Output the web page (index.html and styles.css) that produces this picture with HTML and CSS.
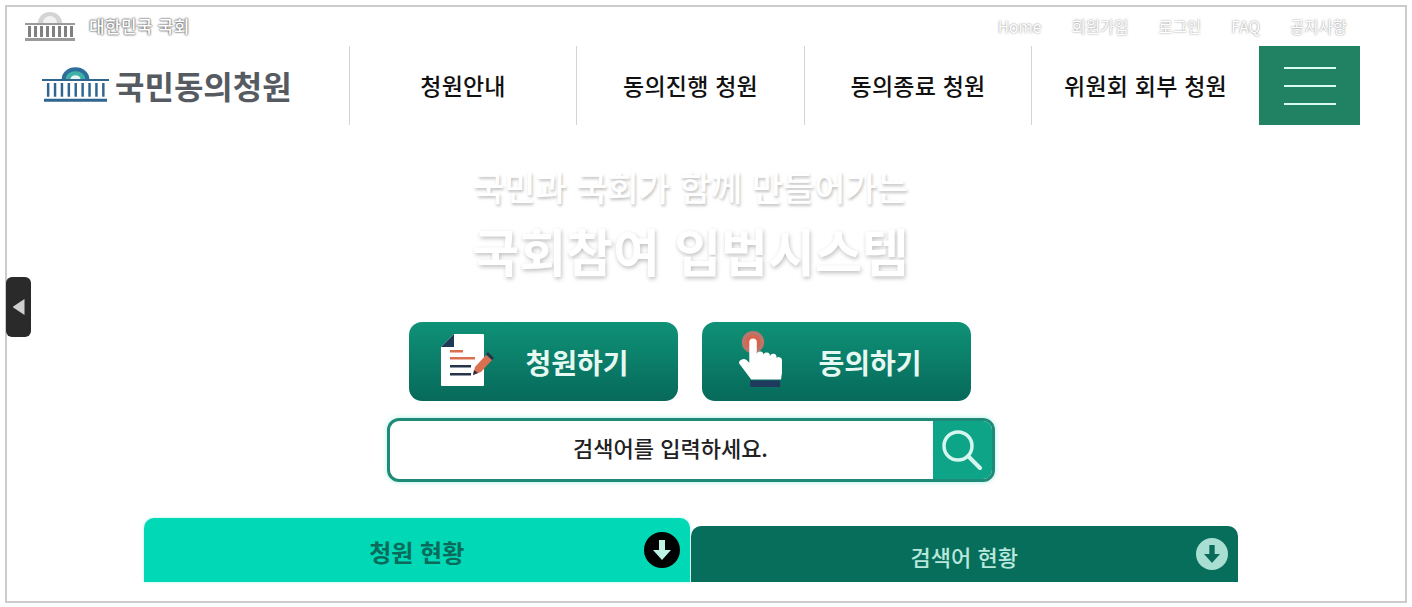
FILE: index.html
```html
<!DOCTYPE html>
<html lang="ko">
	<head>
		<meta charset="UTF-8" />
		<meta name="viewport" content="width=device-width, initial-scale=1.0" />
		<title>국민동의청원</title>
		<link rel="stylesheet" href="styles.css">
	</head>
	<body>
		<div class="frame">
			<button class="side-handle" aria-label="닫기"><span class="side-arrow"></span></button>
			<div class="page">
				<div class="top-bar">
					<a class="assembly" href="#">
						<svg class="assembly-icon" viewBox="0 0 52 32" aria-hidden="true">
							<path d="M14 13a12 11 0 0 1 24 0z" fill="#d4d4d4" />
							<path d="M19 13a7 7 0 0 1 14 0z" fill="#f2f2f2" />
							<path d="M1 13h50v2H1zM1 28h50v3H1z" fill="#9a9a9a" />
							<path d="M4 16h3v11H4zM10 16h3v11h-3zM16 16h3v11h-3zM22 16h3v11h-3zM28 16h3v11h-3zM34 16h3v11h-3zM40 16h3v11h-3zM46 16h3v11h-3z" fill="#808080" />
						</svg>
						<span>대한민국 국회</span>
					</a>
					<ul class="util-links">
						<li>Home</li>
						<li>회원가입</li>
						<li>로그인</li>
						<li>FAQ</li>
						<li>공지사항</li>
					</ul>
				</div>

				<header class="main-nav">
					<a class="logo" href="#">
						<svg class="logo-icon" viewBox="0 0 68 36" aria-hidden="true">
							<path d="M20 12a14 12 0 0 1 28 0z" fill="#2c6f9b" />
							<path d="M24 12a10 8 0 0 1 20 0z" fill="#3fb2a8" />
							<path d="M29 12a5 4 0 0 1 10 0z" fill="#e8f3f4" />
							<path d="M0 12h68v2H0zM2 32h64v3H2z" fill="#2f6690" />
							<path d="M5 16h2.500v14H5zM12 16h2.500v14H12zM19 16h2.500v14H19zM26 16h2.500v14H26zM33 16h2.500v14H33zM40 16h2.500v14H40zM47 16h2.500v14H47zM54 16h2.500v14H54zM61 16h2.500v14H61z" fill="#2f6690" />
						</svg>
						<span>국민동의청원</span>
					</a>
					<nav class="menu">
						<a href="#">청원안내</a>
						<a href="#">동의진행 청원</a>
						<a href="#">동의종료 청원</a>
						<a href="#">위원회 회부 청원</a>
					</nav>
					<button class="menu-toggle" aria-label="전체메뉴">
						<span></span>
						<span></span>
						<span></span>
					</button>
				</header>

				<main class="hero">
					<p class="hero-sub">국민과 국회가 함께 만들어가는</p>
					<h1 class="hero-title">국회참여 입법시스템</h1>

					<div class="actions">
						<a class="action-btn" href="#">
							<svg class="action-icon" viewBox="0 0 54 52" aria-hidden="true">
								<path d="M13 0h29a1 1 0 0 1 1 1v50a1 1 0 0 1-1 1H1a1 1 0 0 1-1-1V13z" fill="#fff" />
								<path d="M13 0v13H0z" fill="#1f3a54" />
								<path d="M9 16h13v2.500H9zM9 23h25v2.500H9z" fill="#d9704f" />
								<path d="M9 31h21v2.500H9zM9 39h21v2.500H9z" fill="#26344a" />
								<path d="M32 41l2-8 11-12 6 5-11 12z" fill="#d9704f" />
								<path d="M45 20l2-2 6 6-2 2z" fill="#26344a" />
								<path d="M32 41l1-5 4 3z" fill="#26344a" />
							</svg>
							<span>청원하기</span>
						</a>
						<a class="action-btn" href="#">
							<svg class="action-icon action-icon-hand" viewBox="0 0 46 60" aria-hidden="true">
								<circle cx="15" cy="12" r="12" fill="#b9766a" />
								<circle cx="15" cy="12" r="8" fill="#d9634c" />
								<path d="M11 12a4 4 0 0 1 8 0v13a3.500 3.500 0 0 1 7 1 3.500 3.500 0 0 1 7 1 3.500 3.500 0 0 1 7 2 3.500 3.500 0 0 1 6 3v13l-1 7H13L1 36a3 3 0 0 1 1-5 5 5 0 0 1 6 0l3 3z" fill="#fff" />
								<path d="M12 53h32v7H12z" fill="#1f3a5c" />
							</svg>
							<span>동의하기</span>
						</a>
					</div>

					<form class="search">
						<div class="search-text">검색어를 입력하세요.</div>
						<button class="search-btn" type="button" aria-label="검색">
							<svg viewBox="0 0 42 42" aria-hidden="true">
								<circle cx="17" cy="17" r="14" fill="none" stroke="#d5f6ee" stroke-width="3.500" />
								<path d="M27 27l12 12" stroke="#d5f6ee" stroke-width="4" stroke-linecap="round" />
							</svg>
						</button>
					</form>

					<div class="tabs">
						<div class="tab tab-active">
							<span>청원 현황</span>
							<svg class="tab-arrow" viewBox="0 0 36 36" aria-hidden="true">
								<circle cx="18" cy="18" r="18" fill="#000" />
								<path d="M15 8h6v10h6l-9 10-9-10h6z" fill="#bdf2e4" />
							</svg>
						</div>
						<div class="tab">
							<span>검색어 현황</span>
							<svg class="tab-arrow" viewBox="0 0 36 36" aria-hidden="true">
								<circle cx="18" cy="18" r="18" fill="#a9ded2" />
								<path d="M15 8h6v10h6l-9 10-9-10h6z" fill="#0b6b5a" />
							</svg>
						</div>
					</div>
				</main>
			</div>
		</div>
	</body>
</html>
```

FILE: styles.css
```css
* {
	margin: 0;
	padding: 0;
	box-sizing: border-box;
}

body {
	font-family: "Noto Sans CJK KR", "Noto Sans", sans-serif;
	background-color: #fff;
	color: #111;
	overflow: hidden;
}

a {
	color: inherit;
	text-decoration: none;
}

button {
	border: 0;
	font: inherit;
}

.frame {
	position: relative;
	width: 1402px;
	height: 598px;
	margin: 5px 0 0 5px;
	padding-left: 14px;
	border: 2px solid #cbcbcb;
	background: #fff;
}

.page {
	width: 1339px;
}

/* Tab on the left edge */
.side-handle {
	position: absolute;
	left: -1px;
	top: 270px;
	width: 25px;
	height: 60px;
	display: flex;
	align-items: center;
	justify-content: center;
	background: #2a2a2a;
	border-radius: 6px;
}

.side-arrow {
	width: 12px;
	height: 16px;
	background: #cfcfcf;
	clip-path: polygon(0 50%, 100% 0, 100% 100%);
}

.top-bar {
	height: 39px;
	display: flex;
	align-items: center;
	justify-content: space-between;
	padding: 0 13px 2px 3px;
}

.assembly {
	display: flex;
	align-items: center;
	gap: 13px;
	font-size: 17px;
	font-weight: 500;
	letter-spacing: 0.3px;
	color: #fff;
	text-shadow: 0 0 2px #555, 0 0 2px #555;
}

.assembly-icon {
	width: 52px;
	height: 32px;
	filter: blur(0.7px);
}

.util-links {
	display: flex;
	gap: 30px;
	list-style: none;
	font-size: 15.5px;
	color: #fff;
	text-shadow: 0 0 2px #777;
}

.main-nav {
	height: 79px;
	display: flex;
	align-items: stretch;
}

.logo {
	width: 328px;
	display: flex;
	align-items: center;
	gap: 6px;
	padding: 0 0 2px 21px;
	font-size: 32px;
	font-weight: 700;
	color: #555b61;
}

.logo-icon {
	width: 67px;
	height: 36px;
}

.menu {
	flex: 1;
	display: grid;
	grid-template-columns: 227px 228px 227px 228px;
}

.menu a {
	display: flex;
	align-items: center;
	justify-content: center;
	padding-bottom: 2px;
	border-left: 1px solid #d4d4d4;
	font-size: 23px;
	font-weight: 500;
	letter-spacing: 0.2px;
}

.menu-toggle {
	width: 101px;
	display: flex;
	flex-direction: column;
	align-items: center;
	justify-content: center;
	gap: 16px;
	background: #208163;
}

.menu-toggle span {
	width: 52px;
	height: 2px;
	background: #d8fbf0;
}

.hero {
	display: flex;
	flex-direction: column;
	align-items: center;
}

.hero-sub {
	margin-top: 40px;
	font-size: 34px;
	line-height: 44px;
	font-weight: 500;
	color: #fff;
	text-shadow: 1px 2px 3px rgba(0, 0, 0, 0.25);
}

.hero-title {
	margin-top: 10px;
	font-size: 51px;
	line-height: 62px;
	font-weight: 700;
	color: #fff;
	text-shadow: 1px 2px 4px rgba(0, 0, 0, 0.25);
}

.actions {
	display: flex;
	gap: 24px;
	margin: 41px 2px 0 0;
}

.action-btn {
	width: 269px;
	height: 79px;
	display: flex;
	align-items: center;
	border-radius: 13px;
	padding-left: 32px;
	background: linear-gradient(#0f9277, #07695a);
	color: #e6f8f2;
	font-size: 28px;
	font-weight: 700;
}

.action-btn span {
	margin-left: 32px;
}

.action-icon {
	width: 54px;
	height: 52px;
	margin: 0 -1px 3px 0;
}

.action-icon-hand {
	width: 43px;
	height: 56px;
	margin: 0 5px 5px 5px;
}

.search {
	width: 608px;
	height: 64px;
	display: flex;
	margin-top: 17px;
	border: 3px solid #1f8a77;
	border-radius: 12px;
	box-shadow: 0 0 5px #a5efe0;
	overflow: hidden;
}

.search-text {
	flex: 1;
	display: flex;
	align-items: center;
	justify-content: center;
	padding: 0 0 6px 19px;
	font-size: 22px;
	font-weight: 500;
	color: #222;
}

.search-btn {
	width: 59px;
	display: flex;
	align-items: center;
	justify-content: center;
	background: #0ea488;
}

.search-btn svg {
	width: 42px;
	height: 42px;
}

.tabs {
	width: 1094px;
	display: flex;
	align-items: flex-end;
	gap: 1px;
	margin-top: 36px;
}

.tab {
	flex: 1;
	height: 56px;
	position: relative;
	display: flex;
	align-items: center;
	justify-content: center;
	padding-top: 3px;
	border-radius: 10px 10px 0 0;
	background: #076e5c;
	color: #b8e7dc;
	font-size: 22px;
	font-weight: 500;
}

.tab-active {
	height: 64px;
	background: #00d8b6;
	color: #0a6b5b;
	font-size: 24px;
	font-weight: 700;
	box-shadow: 0 0 3px #a5f5e8;
}

.tab-arrow {
	position: absolute;
	right: 10px;
	top: 12px;
	width: 32px;
	height: 32px;
}

.tab-active .tab-arrow {
	right: 10px;
	top: 14px;
	width: 36px;
	height: 36px;
}
```
